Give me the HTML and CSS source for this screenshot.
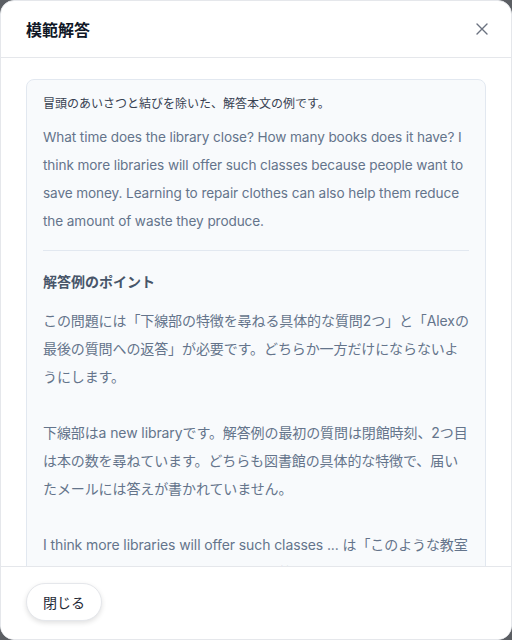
FILE: index.html
```html
<!DOCTYPE html>
<html lang="ja">
<head>
    <meta charset="UTF-8">
    <meta name="viewport" content="width=device-width, initial-scale=1.0">
    <title>模範解答</title>
    <link rel="stylesheet" href="styles.css">
</head>
<body>

    <!-- Model answer dialog -->
    <div class="modal">
        <div class="modal-header">
            <h2 class="modal-title">模範解答</h2>
            <button class="close-button" aria-label="閉じる">
                <svg width="14" height="14" viewBox="0 0 14 14" fill="none" stroke="currentColor" stroke-width="1.4" stroke-linecap="round">
                    <path d="M2 2L12 12M12 2L2 12" />
                </svg>
            </button>
        </div>

        <div class="modal-body">
            <div class="answer-card">
                <p class="answer-note">冒頭のあいさつと結びを除いた、解答本文の例です。</p>
                <p class="answer-text">What time does the library close? How many books does it have? I think more libraries will offer such classes because people want to save money. Learning to repair clothes can also help them reduce the amount of waste they produce.</p>

                <hr class="divider">

                <h3 class="points-title">解答例のポイント</h3>
                <p class="points-text">この問題には「下線部の特徴を尋ねる具体的な質問2つ」と「Alexの最後の質問への返答」が必要です。どちらか一方だけにならないようにします。

下線部はa new libraryです。解答例の最初の質問は閉館時刻、2つ目は本の数を尋ねています。どちらも図書館の具体的な特徴で、届いたメールには答えが書かれていません。

I think more libraries will offer such classes ... は「このような教室を開く図書館が今後増えると思う」と答え、節約したい人がいることを理由にしています。</p>
            </div>
        </div>

        <div class="modal-footer">
            <button class="footer-button">閉じる</button>
        </div>
    </div>

</body>
</html>
```

FILE: styles.css
```css
body {
    margin: 0;
    height: 100vh;
    background-color: #5b5e63;
    font-family: Inter, "Noto Sans CJK JP", sans-serif;
}

/* Dialog shell */
.modal {
    height: 100vh;
    box-sizing: border-box;
    display: flex;
    flex-direction: column;
    background: #fff;
    border: 1px solid #e5e7eb;
    border-radius: 14px;
    overflow: hidden;
}

.modal-header {
    height: 55px;
    flex-shrink: 0;
    display: flex;
    align-items: center;
    justify-content: space-between;
    padding: 0 18px 1px 25px;
    border-bottom: 1px solid #e5e7eb;
}

.modal-title {
    margin: 0;
    font-size: 16px;
    font-weight: 700;
    color: #111827;
}

.close-button {
    border: none;
    background: none;
    padding: 4px;
    color: #6b7280;
    display: flex;
    cursor: pointer;
}

.modal-body {
    flex: 1;
    overflow-y: auto;
    scrollbar-width: none;
    padding: 21px 25px 20px;
}

/* Answer card */
.answer-card {
    background: #f8fafc;
    border: 1px solid #e2e8f0;
    border-radius: 8px;
    padding: 15px 16px 20px;
}

.answer-note {
    margin: 0 0 10px;
    font-size: 12px;
    line-height: 18px;
    color: #374151;
}

.answer-text {
    margin: 0;
    font-size: 13.6px;
    letter-spacing: -0.1px;
    line-height: 28px;
    color: #64748b;
}

.divider {
    border: none;
    border-top: 1px solid #e2e8f0;
    margin: 15px 0 18px;
}

.points-title {
    margin: 0 0 12px;
    font-size: 14px;
    line-height: 26px;
    font-weight: 700;
    color: #475569;
}

.points-text {
    margin: 0;
    font-size: 14px;
    letter-spacing: -0.1px;
    line-height: 28px;
    color: #64748b;
    white-space: pre-line;
}

.modal-footer {
    flex-shrink: 0;
    padding: 16px 25px 18px;
    border-top: 1px solid #e5e7eb;
    background: #fff;
}

.footer-button {
    height: 38px;
    padding: 0 16px;
    border: 1px solid #e5e7eb;
    border-radius: 999px;
    background: #fff;
    box-shadow: 0 2px 5px rgba(0, 0, 0, 0.12);
    font-family: Inter, "Noto Sans CJK JP", sans-serif;
    font-size: 14px;
    color: #1f2937;
    cursor: pointer;
}
```
